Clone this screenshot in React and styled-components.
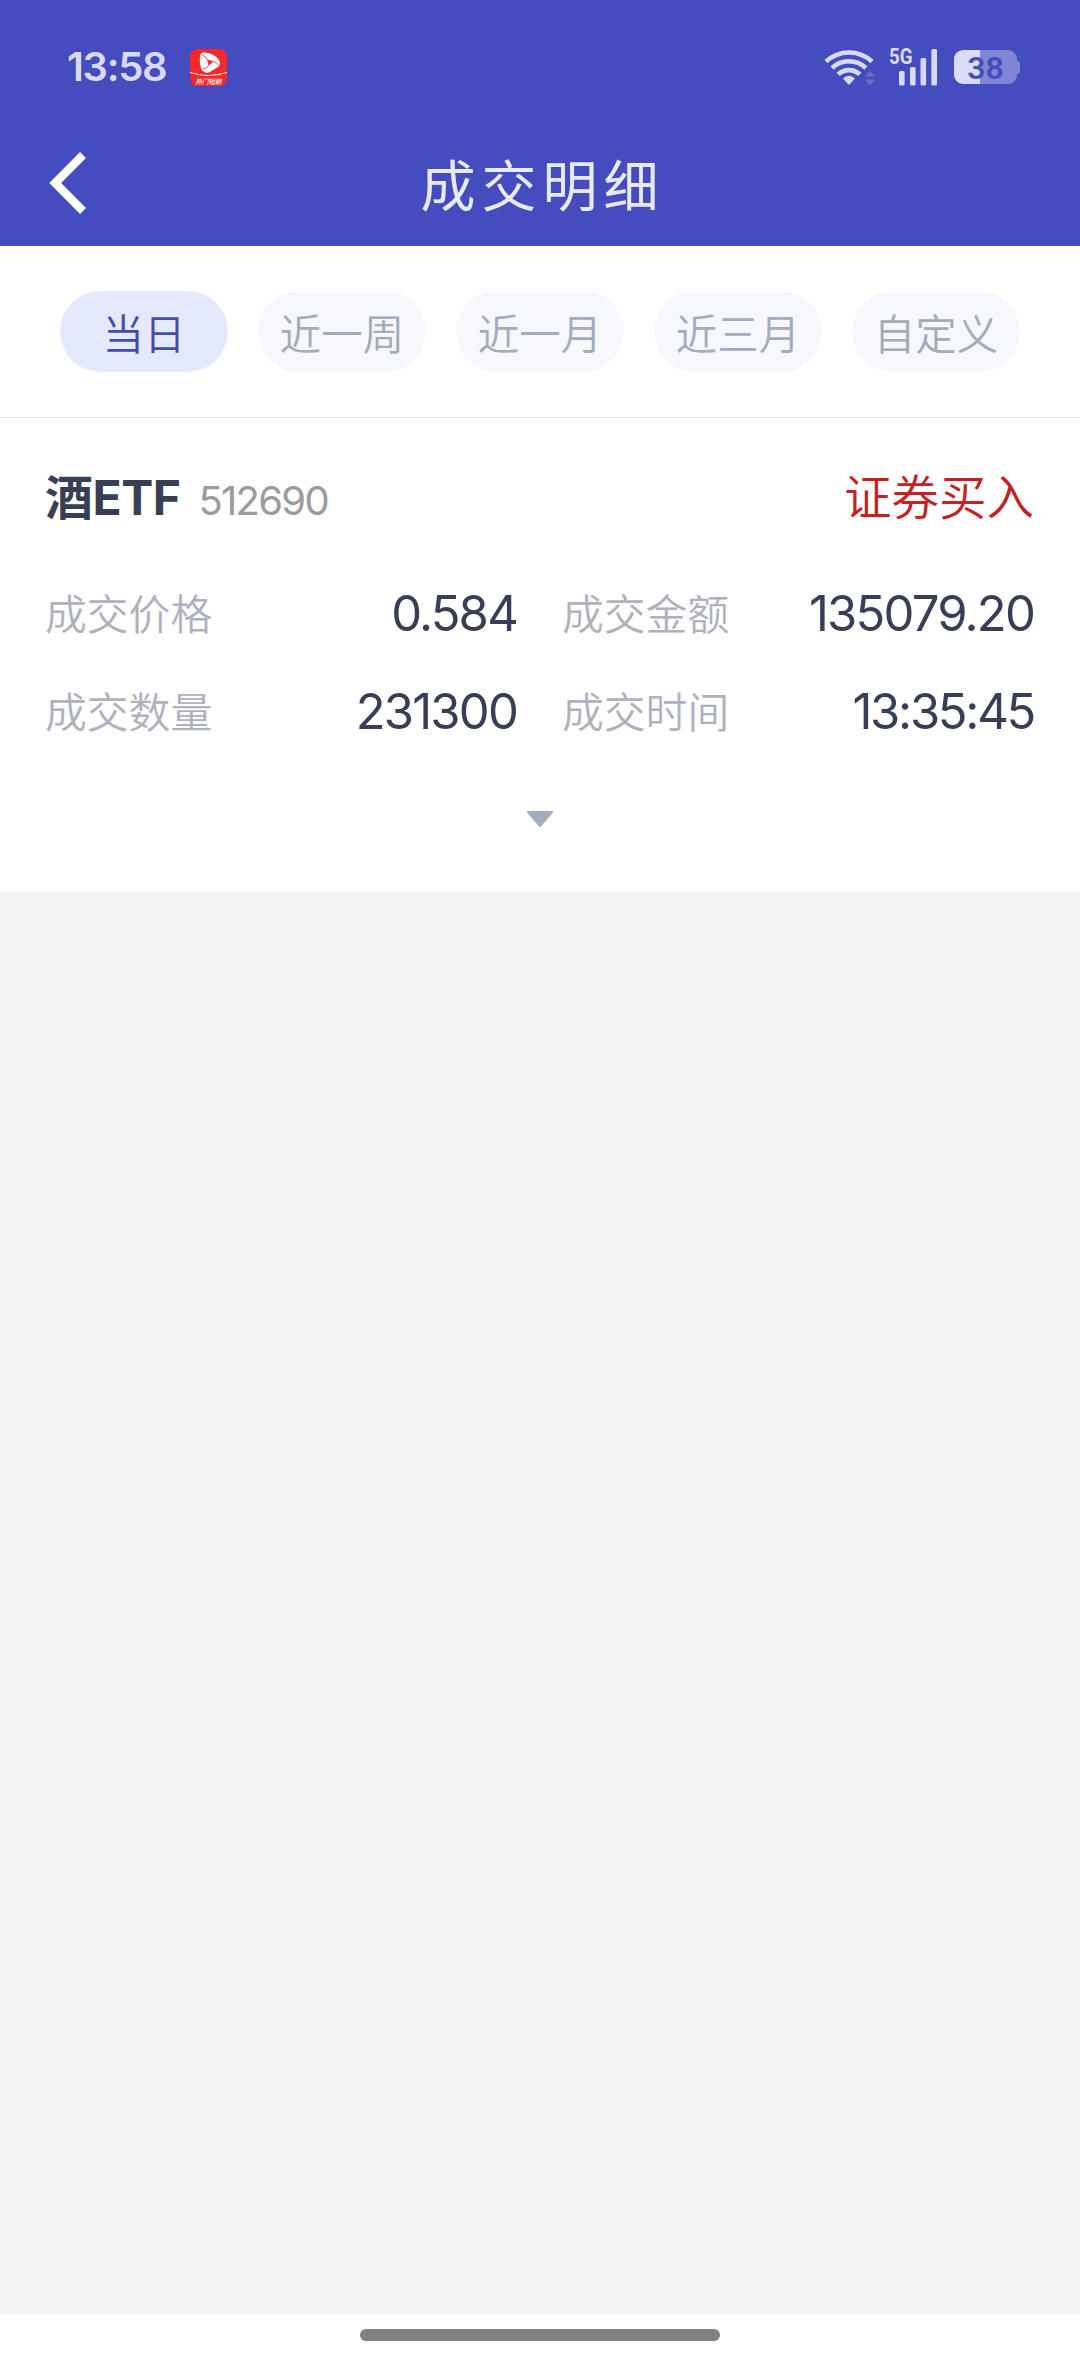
import React from "react";
import styled, { createGlobalStyle } from "styled-components";

const CJK = '"Noto Sans CJK SC", sans-serif';
const LATIN = 'Inter, "Noto Sans CJK SC", sans-serif';

const GlobalStyle = createGlobalStyle`
  * { box-sizing: border-box; }
  body { margin: 0; background: #fff; font-family: ${CJK}; }
`;

const Screen = styled.div`
  width: 1080px;
  height: 2362px;
  display: flex;
  flex-direction: column;
  overflow: hidden;
  background: #f3f4f6;
`;

const Header = styled.header`
  height: 246px;
  flex: none;
  display: flex;
  flex-direction: column;
  background: #444cbe;
`;

const StatusBar = styled.div`
  height: 126px;
  padding: 8px 60px 0 67px;
  display: flex;
  align-items: center;
  justify-content: space-between;
`;

const StatusGroup = styled.div`
  display: flex;
  align-items: center;
`;

const Clock = styled.span`
  width: 123px;
  font: 600 40px/48px ${LATIN};
  letter-spacing: -1.3px;
  color: #d9dafb;
`;

const AppBadge = styled.div`
  width: 37px;
  height: 37px;
  border-radius: 8px;
  overflow: hidden;
  background: #f8262a;
  display: flex;
  flex-direction: column;
  align-items: center;
  justify-content: space-between;
`;

const BadgeText = styled.span`
  font: italic 500 6.5px/9px ${CJK};
  color: #fff;
`;

const NavBar = styled.nav`
  height: 120px;
  padding: 0 49px;
  display: grid;
  grid-template-columns: 120px 1fr 120px;
  align-items: center;
`;

const BackButton = styled.button`
  width: 38px;
  height: 64px;
  margin-top: -6px;
  padding: 0;
  border: 0;
  background: none;
  display: flex;
`;

const Title = styled.h1`
  margin: -8px 0 0;
  padding-left: 5px;
  text-align: center;
  font: 400 55px/80px ${CJK};
  letter-spacing: 6px;
  color: #e8e9f9;
`;

const Filters = styled.div`
  height: 172px;
  flex: none;
  padding: 45px 60px 0;
  display: flex;
  gap: 30px;
  align-items: flex-start;
  background: #fff;
  border-bottom: 1px solid #e3e3e5;
`;

const Pill = styled.button`
  flex: 1;
  height: 81px;
  padding: 1px 0 0;
  border: 0;
  border-radius: 41px;
  display: flex;
  align-items: center;
  justify-content: center;
  white-space: nowrap;
  font: 350 41.5px/60px ${CJK};
  color: ${(p) => (p.$active ? "#444cae" : "#a3abbc")};
  background: ${(p) => (p.$active ? "#e5e9fe" : "#f6f8fd")};
`;

const Card = styled.section`
  height: 474px;
  flex: none;
  padding: 41px 45px 0;
  display: flex;
  flex-direction: column;
  background: #fff;
`;

const CardHead = styled.div`
  height: 72px;
  display: flex;
  align-items: baseline;
`;

const Name = styled.span`
  font: 700 48px/72px ${LATIN};
  letter-spacing: -0.5px;
  color: #383e56;
`;

const Code = styled.span`
  margin-left: 18px;
  font: 400 40px/72px ${LATIN};
  letter-spacing: -1.7px;
  color: #9b9b9b;
`;

const Side = styled.span`
  margin-left: auto;
  font: 350 47.5px/72px ${CJK};
  margin-right: 1px;
  color: #c42123;
`;

const Details = styled.dl`
  margin: 34px 0 0;
  display: grid;
  grid-template-columns: 1fr 1fr;
  grid-auto-rows: 98px;
  column-gap: 44px;
`;

const Detail = styled.div`
  display: flex;
  align-items: center;
  justify-content: space-between;
`;

const Label = styled.dt`
  padding-bottom: 4px;
  font: 350 41.8px/60px ${CJK};
  color: #afb2bd;
`;

const Value = styled.dd`
  margin: 0 1px 0 0;
  font: 400 49px/60px ${LATIN};
  letter-spacing: ${(p) => (p.$tight ? "-2.3px" : "-1.8px")};
  color: #383e56;
`;

const Expand = styled.button`
  margin: 49px auto 0;
  width: 28px;
  height: 18px;
  padding: 0;
  border: 0;
  background: none;
  display: flex;
`;

const HomeStrip = styled.footer`
  height: 48px;
  margin-top: auto;
  flex: none;
  padding-top: 15px;
  display: flex;
  justify-content: center;
  background: #fff;
`;

const HomeBar = styled.div`
  width: 360px;
  height: 12px;
  border-radius: 6px;
  background: #808080;
`;

const WifiIcon = () => (
  <svg width="52" height="38" viewBox="0 0 52 38" fill="none" stroke="#d9dafb" strokeWidth="4.6">
    <path d="M2 13.6a33.5 33.5 0 0 1 46 0" />
    <path d="M8 20a24.6 24.6 0 0 1 34 0" />
    <path d="M14.2 26.4a15.8 15.8 0 0 1 21.6 0" />
    <path d="M25 37l-6-6.6q6-5.4 12 0z" fill="#d9dafb" stroke="none" />
    <path d="M41 28.5l5-6 5 6zM41 31.5h10l-5 6z" fill="#656bcb" stroke="none" />
  </svg>
);

const Signal = styled.div`
  width: 49px;
  height: 38px;
  margin: 0 16px 0 13px;
  display: grid;
`;

const Network = styled.span`
  grid-area: 1 / 1;
  justify-self: start;
  font: 700 22px/18px Roboto, sans-serif;
  transform: scaleX(0.85);
  transform-origin: left;
  color: #d9dafb;
`;

const SignalBars = styled.svg`
  grid-area: 1 / 1;
`;

const Battery = styled.div`
  width: 66px;
  height: 34px;
  display: flex;
  align-items: center;
`;

const BatteryBody = styled.div`
  width: 63px;
  height: 34px;
  border-radius: 9px;
  background: linear-gradient(to right, #dadcf8 26px, #8085d5 26px);
  font: 600 32px/36px Roboto, sans-serif;
  text-align: center;
  color: #444cbe;
`;

const BatteryTip = styled.div`
  width: 3px;
  height: 13px;
  border-radius: 0 4px 4px 0;
  background: #8085d5;
`;

const RANGES = ["当日", "近一周", "近一月", "近三月", "自定义"];

const DETAILS = [
  ["成交价格", "0.584"],
  ["成交金额", "135079.20"],
  ["成交数量", "231300"],
  ["成交时间", "13:35:45"],
];

export default function App() {
  return (
    <Screen>
      <GlobalStyle />
      <Header>
        <StatusBar>
          <StatusGroup>
            <Clock>13:58</Clock>
            <AppBadge>
              <svg width="37" height="28" viewBox="0 0 37 28">
                <path
                  d="M10 7Q11 3 15 3.4Q24 4 29 11Q31 15 28 18L19 23.5Q15 25 12 21Q9 16 10 7Z"
                  fill="#fff"
                />
                <path
                  d="M12 6Q16 7 17.5 11L23 12.5Q27 13 28.5 16M17.5 11L19 16L22.8 12.5M19 16Q17 20 12.5 20"
                  fill="none"
                  stroke="#f8262a"
                  strokeWidth="0.8"
                />
                <path d="M17.5 11l5.3 1.5-3.8 3.7z" fill="#f8262a" />
                <path d="M0 23.5Q18 29.5 37 23.5" fill="none" stroke="#fff" strokeWidth="1" />
              </svg>
              <BadgeText>热门短剧</BadgeText>
            </AppBadge>
          </StatusGroup>
          <StatusGroup>
            <WifiIcon />
            <Signal>
              <Network>5G</Network>
              <SignalBars width="49" height="38" viewBox="0 0 49 38" fill="#d9dafb">
                <rect x="10" y="23" width="5.6" height="14.5" rx="1.5" />
                <rect x="21" y="19" width="5.6" height="18.5" rx="1.5" />
                <rect x="31.5" y="10" width="5.6" height="27.5" rx="1.5" />
                <rect x="42.4" y="1" width="5.6" height="36.5" rx="1.5" />
              </SignalBars>
            </Signal>
            <Battery>
              <BatteryBody>38</BatteryBody>
              <BatteryTip />
            </Battery>
          </StatusGroup>
        </StatusBar>
        <NavBar>
          <BackButton aria-label="返回">
            <svg width="38" height="64" viewBox="0 0 38 64" fill="none" stroke="#fff" strokeWidth="8.4">
              <path d="M34 4L6.2 32L34 60" />
            </svg>
          </BackButton>
          <Title>成交明细</Title>
        </NavBar>
      </Header>
      <Filters>
        {RANGES.map((range, i) => (
          <Pill key={range} $active={i === 0}>
            {range}
          </Pill>
        ))}
      </Filters>
      <Card>
        <CardHead>
          <Name>酒ETF</Name>
          <Code>512690</Code>
          <Side>证券买入</Side>
        </CardHead>
        <Details>
          {DETAILS.map(([label, value]) => (
            <Detail key={label}>
              <Label>{label}</Label>
              <Value $tight={value.includes(":")}>{value}</Value>
            </Detail>
          ))}
        </Details>
        <Expand aria-label="展开">
          <svg width="28" height="18" viewBox="0 0 28 18">
            <path d="M2 2H26L14 16Z" fill="#a3abbd" stroke="#a3abbd" strokeWidth="2" strokeLinejoin="round" />
          </svg>
        </Expand>
      </Card>
      <HomeStrip>
        <HomeBar />
      </HomeStrip>
    </Screen>
  );
}
